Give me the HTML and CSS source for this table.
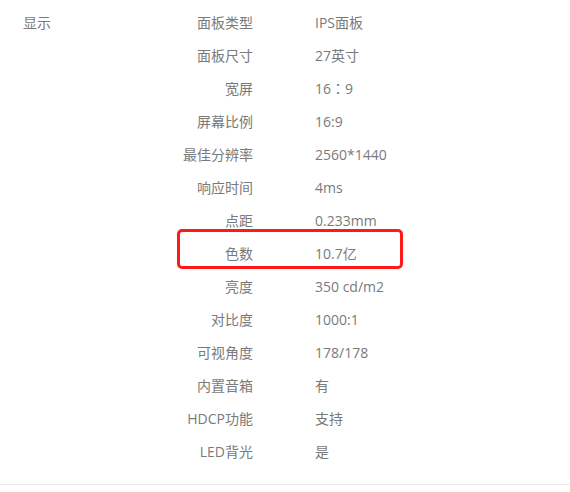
FILE: index.html
```html
<!DOCTYPE html>
<html lang="zh-CN">
<head>
<meta charset="utf-8">
<link rel="stylesheet" href="styles.css">
</head>
<body>
<div class="spec">
  <div class="cat">显示</div>
  <div class="list">
    <div class="row"><span class="k">面板类型</span><span class="v">IPS面板</span></div>
    <div class="row"><span class="k">面板尺寸</span><span class="v">27英寸</span></div>
    <div class="row"><span class="k">宽屏</span><span class="v">16<span class="fw">：</span>9</span></div>
    <div class="row"><span class="k">屏幕比例</span><span class="v">16:9</span></div>
    <div class="row"><span class="k">最佳分辨率</span><span class="v">2560*1440</span></div>
    <div class="row"><span class="k">响应时间</span><span class="v">4ms</span></div>
    <div class="row"><span class="k">点距</span><span class="v">0.233mm</span></div>
    <div class="row hl"><span class="k">色数</span><span class="v">10.7亿</span></div>
    <div class="row"><span class="k">亮度</span><span class="v">350 cd/m2</span></div>
    <div class="row"><span class="k">对比度</span><span class="v">1000:1</span></div>
    <div class="row"><span class="k">可视角度</span><span class="v">178/178</span></div>
    <div class="row"><span class="k">内置音箱</span><span class="v">有</span></div>
    <div class="row"><span class="k">HDCP功能</span><span class="v">支持</span></div>
    <div class="row"><span class="k">LED背光</span><span class="v">是</span></div>
  </div>
</div>
</body>
</html>
```
FILE: styles.css
```css
html, body {
  margin: 0;
  padding: 0;
  background: #fff;
}
body {
  font-family: "Open Sans", "Noto Sans CJK SC", sans-serif;
  font-size: 14px;
  color: #7a7a7a;
}
.spec {
  display: flex;
  padding: 6px 0 16px;
  border-bottom: 1px solid #ebebeb;
}
.cat {
  flex: 0 0 137px;
  padding-left: 23px;
  height: 33px;
  line-height: 33px;
}
.list {
  flex: 1;
}
.row {
  position: relative;
  display: grid;
  grid-template-columns: 93px 1fr;
  column-gap: 62px;
  height: 33px;
  line-height: 33px;
}
.k {
  text-align: right;
  white-space: nowrap;
}
.fw {
  font-family: "Noto Sans CJK JP", sans-serif;
}
.hl::after {
  content: "";
  position: absolute;
  left: 17px;
  top: -8px;
  width: 220px;
  height: 34px;
  border: 3px solid #ff1a1a;
  border-radius: 5px;
}
```
